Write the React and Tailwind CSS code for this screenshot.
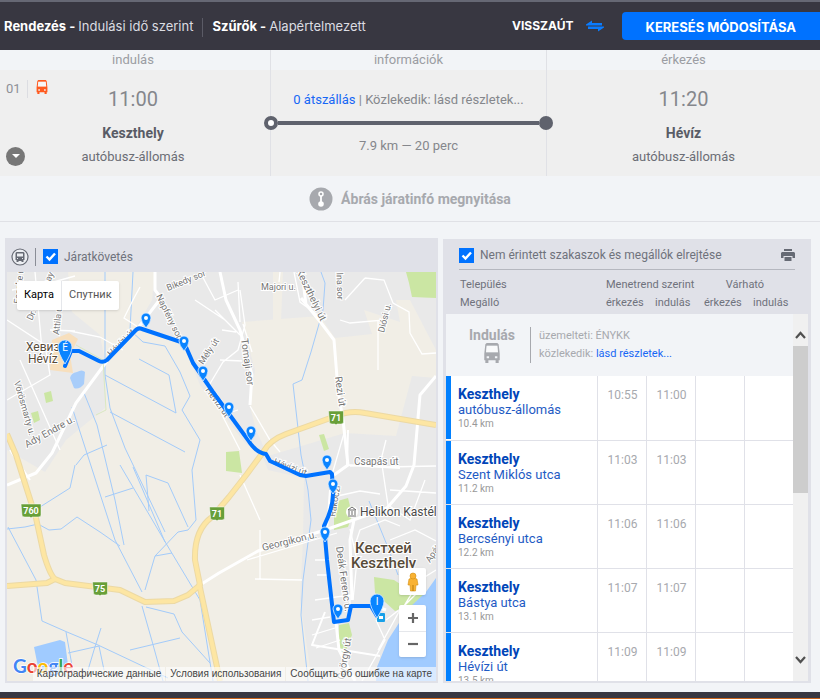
import React from "react";

const stops = [
  { town: "Keszthely", stop: "autóbusz-állomás", km: "10.4 km", arr: "10:55", dep: "11:00" },
  { town: "Keszthely", stop: "Szent Miklós utca", km: "11.2 km", arr: "11:03", dep: "11:03" },
  { town: "Keszthely", stop: "Bercsényi utca", km: "12.2 km", arr: "11:06", dep: "11:06" },
  { town: "Keszthely", stop: "Bástya utca", km: "13.1 km", arr: "11:07", dep: "11:07" },
  { town: "Keszthely", stop: "Hévízi út", km: "13.5 km", arr: "11:09", dep: "11:09" },
];

const pins = [[146, 328], [184, 351], [203, 381], [229, 417], [251, 441], [327, 470], [333, 494], [325, 542], [338, 619]];

const shields = [
  { x: 31, y: 511, n: "760", w: 20 },
  { x: 100, y: 589, n: "75", w: 15 },
  { x: 217, y: 514, n: "71", w: 15 },
  { x: 336, y: 418, n: "71", w: 15 },
];

const route =
  "M65 366 L71 351 H79 L99 361 Q103 363 107 360 L135 331 Q138 327 142 329 L181 342 L186 347 L193 363 L213 392 L248 440 Q256 453 266 454 L270 461 L300 475 L306 476 L330 472 L332 474 L333 494 Q333 508 324 526 L327 560 L334 622 L348 620 L351 606 L371 606 L377 616";

function BusIcon({ className }) {
  return (
    <svg viewBox="0 0 12 15" className={className} aria-hidden="true">
      <path fill="currentColor" fillRule="evenodd" d="M2 0h8l1 1 .8 7v5H11v2H8.700v-2H3.300v2H1v-2H.2V8L1 1zM2 2l-.5 5h9L10 2zm0 8v1.500h1.800V10zm6.200 0v1.500H10V10z" />
      <path fill="#fff" opacity=".5" d="M2 2h8l.5 5h-9z" />
    </svg>
  );
}

function Check({ id, label }) {
  return (
    <div className="flex items-center gap-1.5">
      <span className="relative flex size-[15px]">
        <input id={id} type="checkbox" defaultChecked className="size-[15px] appearance-none bg-[#0072ff]" />
        <svg viewBox="0 0 15 15" className="pointer-events-none absolute inset-0" aria-hidden="true">
          <path d="M3.500 7.500l3 3 5.500-6" fill="none" stroke="#fff" strokeWidth="2.400" />
        </svg>
      </span>
      <label htmlFor={id} className="text-xs text-[#6f727c]">{label}</label>
    </div>
  );
}

function MapDrawing() {
  return (
    <svg viewBox="7 272 429 409" preserveAspectRatio="xMidYMid slice" className="block h-full w-full" role="img" aria-label="Térkép">
      <rect x="7" y="272" width="429" height="409" fill="#e9e9e9" />
      <g fill="#f1eee6">
        <path d="M68 272H155L152 300 138 324 184 345 200 385 245 443 262 456 268 470 304 478 303 540 300 600 312 681H7V450L45 472 66 440 105 408V362L100 335 72 312Z" />
        <path d="M242 322L320 316 335 338 372 334 364 310 400 322 396 300 410 300 436 350V378L412 376 396 436 345 433 268 456 256 430 250 407 255 370Z" />
        <path d="M273 272h10l-2 50h-8z" />
      </g>
      <g fill="#cbe6a3">
        <path d="M406 272h30v26l-24-1-3-14z" />
        <path d="M44 393l7-2 2 10-7 2zM31 413l7-2 2 9-6 3zM226 452l13-1 3 22-16-2zM319 435l5-1 5 15-5 2zM334 502l14-4 2 8 5 1-7 20-14 3zM374 577l20 3 20 13 12-3-3 13-28 8-20-18zM339 625l10-2 3 12-8 20-6-10z" />
      </g>
      <path fill="#a0cbff" d="M436 578L426 592 408 609 388 640 377 667 376 681H436ZM34 647L60 640 65 642 68 665 60 672H39Z" />
      <path fill="#a8cdfa" d="M70 378q1-5 7-6 5-3 8 0l-1 12q-5 6-10 4z" />
      <path fill="#f7dfbd" d="M52 340l17-7 9 6-8 16 3 18-23-3z" />

      {/* canals and streams */}
      <g fill="none" stroke="#a3cbfa" strokeWidth="1">
        <path d="M105 272V375L110 408 125 448 165 532M133 272L130 330 143 342 165 346 180 372 190 396 182 410 200 440 192 470 196 520 188 530 178 532 155 556 145 590M139 359L169 375 176 413M105 375L176 413M110 412L185 452M72 407L102 500 115 540 142 592M84 393L97 425 115 500 124 545M76 465L84 455 107 445M75 465L70 488 40 507M8 527L36 580 42 621 67 632 98 645 168 678M7 529L25 527 38 524 49 530 61 529 77 517 100 532 120 546M105 497L133 488M120 465L167 545 200 600 213 681M133 467L165 542M146 475L168 483 188 527M146 475L149 511M142 606L152 641 163 681M146 607L174 614 182 632 210 663M130 650L180 638M101 628L94 650 88 670M66 632L73 671M68 653L99 646 104 670M155 556L172 553" />
        <path d="M321 272L325 283 323 310 311 352 302 380 293 384 301 455 308 490 311 520 303 580 301 615 308 681M369 501L389 550 398 575" />
      </g>
      {/* streets */}
      <g fill="none" stroke="#fff" strokeWidth="1.300">
        <path d="M12 290L50 283 75 276M7 320L45 345 50 375 7 400M20 360L60 450M35 272L42 350M20 285L60 285 66 300M70 331L100 337 123 350M50 330L75 331M140 287L133 300 124 318 138 327M195 300L225 320 240 335M200 272L215 300 238 290M215 310L240 335M240 290L245 325 238 350 223 362 205 392M238 282L240 322M220 360L242 361M222 330L236 332M238 410L222 415 240 450M250 406L270 440 280 452M243 324L252 352M280 272L279 282M294 272L300 302 322 318M340 320L350 323 385 320 392 306M365 278L384 280 393 303 409 312 410 333 422 354 436 353M345 300L365 278M378 320L378 370M302 580L255 579M247 560L337 533M260 530V580M240 475L260 520M331 478L345 430M333 497L360 491 380 494M350 466L380 464 386 440M384 467L436 466M350 529L357 560 353 600M355 545L360 530 385 520 400 526M382 465L388 505 410 520 425 480M390 490L436 493M390 540L415 530 436 541M315 600L350 595 350 612M312 620L330 617M312 635L335 628M316 648L340 640M315 560L327 560M317 575L328 575M376 620L385 640 362 681M386 620L404 606 420 580 436 570M378 650L400 610 425 585" />
      </g>
      <g fill="none" stroke="#fff" strokeLinejoin="round">
        <path strokeWidth="3" d="M7 485L36 473 52 453 76 403 107 361M155 272V290L161 298 138 328M220 272L226 300 240 330 252 375 250 405M301 298L322 324 334 340 338 390 343 420 348 465 334 475M302 272L306 305M436 376L420 395 414 465M414 465L406 486 387 508 325 530 258 551 219 573 200 585M336 622L339 650 355 681M352 600L350 540 354 520M371 605L386 610" />
        <path strokeWidth="2" d="M10 450L30 480M348 430L347 465 400 468M327 530L330 490M325 612L312 645 380 656" />
      </g>
      {/* main roads */}
      {[["#ecd9a4", 6], ["#fde6a3", 4]].map(([color, width]) => (
        <path key={color} fill="none" stroke={color} strokeWidth={width} strokeLinejoin="round"
          d="M7 434L16 455 36 518 44 555Q50 575 55 579L65 583 120 590 145 602 174 601 188 595 200 585 195 560Q194 530 212 517L229 497 247 474 264 451Q270 440 286 434L336 416Q350 410 365 413L436 425M7 586L47 583 55 579M199 583L220 681" />
      ))}
      <g fill="none" stroke="#d9e8c2"><path d="M76 345L103 360 106 410 96 415" /></g>

      {/* road names */}
      <g fill="#757575" stroke="#fff" strokeWidth="2" paintOrder="stroke" className="font-[Roboto,sans-serif]" fontSize="9">
        <text transform="translate(20 304) rotate(-84)">Fecske u.</text>
        <text transform="translate(32 321) rotate(-65)">Dr. Babócsay u.</text>
        <text transform="translate(59 335) rotate(-84)">Attila u.</text>
        <text transform="translate(168 291) rotate(-22)">Bikedy sor</text>
        <text transform="translate(156 296) rotate(64)">Napfény sor</text>
        <text transform="translate(203 365) rotate(-56)">Mély út</text>
        <text transform="translate(111 357) rotate(-45)">Hévízi út</text>
        <text transform="translate(205 390) rotate(54)">Hévízi út</text>
        <text transform="translate(273 464) rotate(20)">Hévízi út</text>
        <text transform="translate(241 339) rotate(82)" fontSize="10">Tomaji sor</text>
        <text x="261" y="290">Majori u.</text>
        <text transform="translate(296 271) rotate(64)" fontSize="10">Keszthelyi út</text>
        <text transform="translate(336 260) rotate(88)">Malna sor</text>
        <text transform="translate(384 333) rotate(-76)">Diósi u.</text>
        <text transform="translate(335 377) rotate(82)" fontSize="10">Rezi út</text>
        <text x="354" y="465" fontSize="10">Csapás út</text>
        <text transform="translate(14 382) rotate(74)">Vörösmarty u.</text>
        <text transform="translate(27 448) rotate(-29)" fontSize="10">Ady Endre u.</text>
        <text transform="translate(263 551) rotate(-14)" fontSize="10">Georgikon u.</text>
        <text transform="translate(335 517) rotate(-80)">Rákóczi</text>
        <text transform="translate(336 547) rotate(82)" fontSize="10">Deák Ferenc u.</text>
        <text transform="translate(344 680) rotate(-80)" fontSize="10">György út</text>
        <text transform="translate(430 563) rotate(-55)">Apát u.</text>
      </g>

      {shields.map((s) => (
        <g key={s.x}>
          <path fill="#689f38" stroke="#fff" strokeWidth=".5" d={`M${s.x - s.w / 2} ${s.y - 7}h${s.w}v11q0 2-3 2h-${s.w / 2 - 4}l-1 1-1-1h-${s.w / 2 - 5}q-3 0-3-2z`} />
          <text x={s.x} y={s.y + 3} textAnchor="middle" fontSize="9" fontWeight="bold" fill="#fff" className="font-[Roboto,sans-serif]">{s.n}</text>
        </g>
      ))}

      <g fill="#574b39" stroke="#fff" strokeWidth="2" paintOrder="stroke" className="font-[Roboto,sans-serif]">
        <text x="26" y="351" fontSize="12">Хевиз</text>
        <text x="28" y="363" fontSize="12">Hévíz</text>
        <text x="355" y="553" fontSize="15" fontWeight="500">Кестхей</text>
        <text x="351" y="568" fontSize="15" fontWeight="500">Keszthely</text>
        <text x="360" y="516" fontSize="12" fill="#4a4a4a">Helikon Kastélymúzeum</text>
      </g>
      <circle cx="352" cy="512" r="6" fill="#fff" />
      <path d="M348 510l4-3 4 3zM348 516h8M349 511v4M352 511v4M355 511v4" fill="none" stroke="#6b6b6b" />

      <path d={route} fill="none" stroke="#0072ff" strokeWidth="4" strokeLinejoin="round" strokeLinecap="round" />
      <rect x="377" y="613" width="8" height="9" rx="1" fill="#18a0e8" />
      <path d="M379 616h4v3h-4z" fill="#fff" />
      {pins.map(([x, y]) => (
        <g key={y} transform={`translate(${x} ${y})`}>
          <path d="M0 0Q-5-6-5-10a5 5 0 0 1 10 0Q5-6 0 0z" fill="#0a84ff" stroke="#e4f0ff" strokeWidth=".8" />
          <circle cy="-10" r="2" fill="#fff" />
        </g>
      ))}
      {[[65, 363, "É"], [377, 617, "I"]].map(([x, y, letter]) => (
        <g key={letter} transform={`translate(${x} ${y})`}>
          <path d="M0 1Q-7-10-7-16a7 7 0 0 1 14 0Q7-10 0 1z" fill="#0a84ff" stroke="#dcecff" strokeWidth=".8" />
          <text y="-12" textAnchor="middle" fontSize="10" fill="#fff" className="font-[Roboto,sans-serif]">{letter}</text>
        </g>
      ))}
      <text x="13" y="673" fontSize="19" fontWeight="bold" stroke="#fff" strokeWidth="1.500" paintOrder="stroke" className="font-[Lato,sans-serif]">
        <tspan fill="#4285f4">G</tspan><tspan fill="#ea4335">o</tspan><tspan fill="#fbbc05">o</tspan><tspan fill="#4285f4">g</tspan><tspan fill="#34a853">l</tspan><tspan fill="#ea4335">e</tspan>
      </text>
    </svg>
  );
}

function MapPanel() {
  return (
    <section className="border-2 border-t-0 border-[#e0e1e8] bg-[#e0e1e8]">
      <div className="flex h-[34px] items-center pl-1 pt-[3px]">
        <svg viewBox="0 0 18 18" className="size-[18px]" aria-hidden="true">
          <circle cx="9" cy="9" r="8" fill="#eceef2" stroke="#666a74" strokeWidth="1.200" />
          <path fillRule="evenodd" fill="#666a74" d="M5.500 4h7l1 1v7h-1v2h-2v-1h-3v1h-2v-2h-1V5zm.5 1.500v3h6v-3zm0 4.500v1h1v-1zm5 0v1h1v-1z" />
        </svg>
        <span className="ml-1.5 mr-[7px] h-[18px] w-px bg-[#8a8d96]" />
        <Check id="follow" label="Járatkövetés" />
      </div>
      <div className="relative h-[409px] overflow-hidden">
        <MapDrawing />
        <div className="absolute left-2.5 top-[9px] flex h-[29px] divide-x divide-gray-200 rounded-xs bg-white font-[Roboto,sans-serif] text-[11px] shadow">
          <button className="px-[7px] text-black">Карта</button>
          <button className="px-[7px] text-[#565656]">Спутник</button>
        </div>
        <div className="absolute bottom-6 right-2.5 flex w-[27px] flex-col gap-2.5">
          <button aria-label="Street View" className="flex h-[27px] items-center justify-center rounded-xs bg-white shadow">
            <svg viewBox="0 0 12 20" className="h-5 w-3" aria-hidden="true">
              <path fill="#f9b233" stroke="#d38e10" strokeWidth=".6" d="M2 7q4-2 8 0l1 6H9l-.5 6h-5L3 13H1z" />
              <circle cx="6" cy="4" r="3" fill="#f9b233" stroke="#d38e10" strokeWidth=".6" />
              <path d="M6 13v6" stroke="#b87a0b" />
            </svg>
          </button>
          <div className="flex h-[52px] flex-col items-stretch divide-y divide-gray-200 rounded-xs bg-white shadow">
            {["M1 6h10M6 1v10", "M1 6h10"].map((d, i) => (
              <button key={d} aria-label={i ? "Kicsinyítés" : "Nagyítás"} className="flex flex-1 items-center justify-center">
                <svg viewBox="0 0 12 12" className="size-3" aria-hidden="true"><path d={d} stroke="#666" strokeWidth="2.200" /></svg>
              </button>
            ))}
          </div>
        </div>
        <div className="absolute bottom-0 right-0 flex gap-px whitespace-nowrap font-['Liberation_Sans',sans-serif] text-[10px] leading-[14px] text-[#444]">
          <a href="#data" className="bg-white/60 px-1">Картографические данные</a>
          <a href="#terms" className="bg-white/60 px-1">Условия использования</a>
          <a href="#report" className="bg-white/60 px-1">Сообщить об ошибке на карте</a>
        </div>
      </div>
    </section>
  );
}

function Columns() {
  return (
    <colgroup>
      <col />
      <col className="w-[49px]" />
      <col className="w-[49px]" />
      <col className="w-[49px]" />
      <col className="w-[49px]" />
    </colgroup>
  );
}

function StopsPanel() {
  return (
    <section className="mt-px border-x-3 border-b-2 border-[#e0e1e8] bg-[#f2f4f7]">
      <div className="h-[75px] bg-[#e0e1e8] text-[#6f727c]">
        <div className="mx-[13px] flex h-[31px] items-center justify-between border-b border-[#b5b7bf] pt-0.5">
          <Check id="hide" label="Nem érintett szakaszok és megállók elrejtése" />
          <button aria-label="Nyomtatás">
            <svg viewBox="0 0 14 12" className="h-3 w-3.5" aria-hidden="true">
              <path fill="#666a74" fillRule="evenodd" d="M3 0h8v2H3zM1 3h12l1 1v5h-2.500V7h-9v2H0V4zm2.500 5h7v4h-7z" />
            </svg>
          </button>
        </div>
        <div className="pr-4 pt-1.5">
          <table className="w-full table-fixed text-left text-[11px] leading-[18px]">
            <Columns />
            <thead>
              <tr>
                <th className="pl-3.5 font-normal">Település</th>
                <th colSpan={2} className="whitespace-nowrap pl-2.5 font-normal">Menetrend szerint</th>
                <th colSpan={2} className="pl-1 text-center font-normal">Várható</th>
              </tr>
              <tr>
                <th className="pl-3.5 font-normal">Megálló</th>
                <th className="pl-2.5 font-normal">érkezés</th>
                <th className="pl-2.5 font-normal">indulás</th>
                <th className="pl-2.5 font-normal">érkezés</th>
                <th className="pl-2.5 font-normal">indulás</th>
              </tr>
            </thead>
          </table>
        </div>
      </div>
      <div className="flex h-[367px] overflow-hidden">
        <div className="min-w-0 flex-1">
          <div className="flex h-[62px] items-center text-[11px] text-[#a7a9ae]">
            <div className="ml-[22px] flex w-12 flex-col items-center">
              <span className="text-sm font-bold leading-4">Indulás</span>
              <BusIcon className="h-5 w-4" />
            </div>
            <div className="ml-3.5 border-l border-[#a7a9ae] pl-2 leading-[18px]">
              <p>üzemelteti: ÉNYKK</p>
              <p>közlekedik: <a href="#details" className="text-[#1767f5]">lásd részletek...</a></p>
            </div>
          </div>
          <table className="w-full table-fixed border-collapse bg-white">
            <Columns />
            <tbody>
              {stops.map((s) => (
                <tr key={s.km} className="h-16 border-b border-[#e0e1e8] align-top">
                  <td className="p-0">
                    <div className="h-[63px] border-l-5 border-[#0080ff] pl-[7px] pt-2.5">
                      <p className="text-sm font-bold leading-4 text-[#0045b8]">{s.town}</p>
                      <p className="text-[13px] leading-4 text-[#1f5bc4]">{s.stop}</p>
                      <p className="text-[10px] leading-[11px] text-[#999]">{s.km}</p>
                    </div>
                  </td>
                  <td className="border-l border-[#e0e1e8] pl-2.5 pt-[11px] text-xs text-[#a7a9ae]">{s.arr}</td>
                  <td className="border-l border-[#e0e1e8] pl-2.5 pt-[11px] text-xs text-[#a7a9ae]">{s.dep}</td>
                  <td className="border-l border-[#e0e1e8]" />
                  <td className="border-l border-[#e0e1e8]" />
                </tr>
              ))}
            </tbody>
          </table>
        </div>
        <div className="flex w-[15px] flex-col items-center bg-[#f0f0f0]">
          <svg viewBox="0 0 15 32" className="h-8 w-[15px] shrink-0" aria-hidden="true"><path d="M3 24l4.500-5 4.500 5" fill="none" stroke="#505050" strokeWidth="2.200" /></svg>
          <div className="h-[147px] w-full shrink-0 bg-[#cdcdcd]" />
          <svg viewBox="0 0 15 32" className="mt-auto h-8 w-[15px] shrink-0" aria-hidden="true"><path d="M3 8l4.500 5L12 8" fill="none" stroke="#505050" strokeWidth="2.200" /></svg>
        </div>
      </div>
    </section>
  );
}

function Place({ time, town, stop }) {
  return (
    <div className="pt-[17px] text-center">
      <p className="text-xl leading-6 text-[#85878c]">{time}</p>
      <p className="mt-3 text-sm font-bold leading-5 text-[#595c66]">{town}</p>
      <p className="mt-1 text-[13px] leading-5 text-[#6b6d75]">{stop}</p>
    </div>
  );
}

export default function App() {
  return (
    <div className="overflow-hidden bg-[#f2f4f7] font-[Roboto,sans-serif]">
      <header className="flex h-[50px] items-center justify-between border-t-2 border-[#666874] bg-[#383741] pl-1 font-[Inter,sans-serif] text-[13px] text-[#dcdde2]">
        <div className="flex items-center pt-0.5">
          <button><b className="text-white">Rendezés - </b>Indulási idő szerint</button>
          <span className="mx-[9px] h-[19px] w-px bg-[#5b5b66]" />
          <button><b className="text-white">Szűrők - </b>Alapértelmezett</button>
        </div>
        <div className="flex items-center">
          <button className="flex items-center gap-3 text-xs font-bold text-white">
            VISSZAÚT
            <svg viewBox="0 0 18 12" className="h-3 w-[18px]" aria-hidden="true">
              <path fill="#0a7cff" d="M0 4.500L6 .5V3h10v2.500H0zM18 7.500l-6 4V9H2V6.500h16z" />
            </svg>
          </button>
          <button className="ml-[18px] h-7 rounded-l-sm bg-[#0072ff] px-6 pt-1 text-[13px] font-bold text-white">KERESÉS MÓDOSÍTÁSA</button>
        </div>
      </header>

      <div className="grid grid-cols-[271fr_276fr_273fr] divide-x divide-[#e0e1e6] text-center text-[13px] leading-5 text-[#9b9da3]">
        <div className="pr-1">indulás</div>
        <div>információk</div>
        <div>érkezés</div>
      </div>
      <section className="grid h-[106px] grid-cols-[271fr_276fr_273fr] divide-x divide-[#e0e1e6] bg-[#efefef]">
        <div className="relative">
          <div className="absolute left-1.5 top-2.5 flex items-start gap-2">
            <span className="border-r border-[#dcdde2] pr-1.5 text-[13px] leading-[18px] text-[#8e9096]">01</span>
            <BusIcon className="h-3.5 w-3 text-[#ff5a1f]" />
          </div>
          <button aria-label="Részletek" className="absolute bottom-2.5 left-1.5 flex size-[19px] items-center justify-center rounded-full bg-[#777]">
            <svg viewBox="0 0 8 5" className="h-[5px] w-2" aria-hidden="true"><path d="M0 0h8L4 4z" fill="#fff" /></svg>
          </button>
          <div className="pr-1"><Place time="11:00" town="Keszthely" stop="autóbusz-állomás" /></div>
        </div>
        <div className="pt-5 text-center text-[13px] leading-5 text-[#85878c]">
          <p><a href="#transfers" className="text-[#1767f5]">0 átszállás</a> | Közlekedik: lásd részletek...</p>
          <div className="relative z-10 -mx-[7px] mt-1.5 flex items-center">
            <span className="size-3.5 rounded-full border-4 border-[#5f626d] bg-white" />
            <span className="h-1 flex-1 bg-[#5f626d]" />
            <span className="size-3.5 rounded-full bg-[#5f626d]" />
          </div>
          <p className="mt-1.5">7.9 km — 20 perc</p>
        </div>
        <Place time="11:20" town="Hévíz" stop="autóbusz-állomás" />
      </section>

      <div className="flex h-[46px] items-center justify-center border-b border-[#e0e1e6]">
        <button className="flex items-center gap-2 text-sm font-bold text-[#a7a9ae]">
          <svg viewBox="0 0 24 24" className="size-6" aria-hidden="true">
            <circle cx="12" cy="12" r="11.500" fill="#a7a9ae" />
            <path d="M12 7v9" stroke="#fff" strokeWidth="1.800" />
            <circle cx="12" cy="7" r="2" fill="#a7a9ae" stroke="#fff" strokeWidth="1.500" />
            <circle cx="12" cy="17" r="2.800" fill="#fff" />
          </svg>
          Ábrás járatinfó megnyitása
        </button>
      </div>

      <main className="grid grid-cols-[433fr_368fr] gap-[5px] pb-[9px] pl-[5px] pr-[9px] pt-4">
        <MapPanel />
        <StopsPanel />
      </main>
      <footer className="h-[7px] border-b border-[#c8641e] bg-[#383741]" />
    </div>
  );
}
